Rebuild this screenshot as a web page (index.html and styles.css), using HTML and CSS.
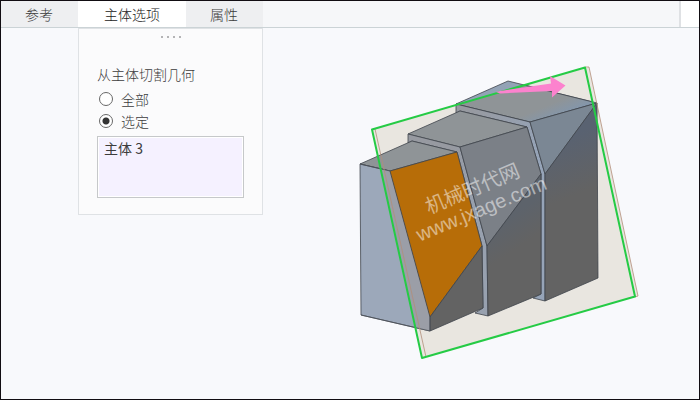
FILE: index.html
```html
<!DOCTYPE html>
<html lang="zh-CN">
<head>
    <meta charset="UTF-8">
    <meta name="viewport" content="width=device-width, initial-scale=1.0">
    <title>主体选项</title>
    <link rel="stylesheet" href="styles.css">
</head>
<body>

<!-- Tabs -->
<header class="tab-bar">
    <button type="button" class="tab">参考</button>
    <button type="button" class="tab tab-body active">主体选项</button>
    <button type="button" class="tab">属性</button>
    <div class="tab-end"></div>
</header>

<main class="workspace">
    <!-- Body options panel -->
    <form class="panel">
        <div class="grip"><span></span><span></span><span></span><span></span></div>
        <fieldset class="options">
            <legend>从主体切割几何</legend>
            <label class="option"><input type="radio" name="bodies" value="all"> 全部</label>
            <label class="option"><input type="radio" name="bodies" value="selected" checked> 选定</label>
            <select class="collector" size="3" aria-label="选定主体">
                <option>主体 3</option>
            </select>
        </fieldset>
    </form>

    <!-- Model view -->
    <section class="viewport">
        <svg class="model" viewBox="355 60 290 304" width="290" height="304">
            <defs>
                <linearGradient id="shade" gradientUnits="userSpaceOnUse" x1="560" y1="140" x2="582" y2="192">
                    <stop offset="0" stop-color="#596271"/>
                    <stop offset="1" stop-color="#636363"/>
                </linearGradient>
                <linearGradient id="shadeMid" gradientUnits="userSpaceOnUse" x1="505" y1="220" x2="522" y2="245">
                    <stop offset="0" stop-color="#5d636b"/>
                    <stop offset="1" stop-color="#636363"/>
                </linearGradient>
                <linearGradient id="top" gradientUnits="userSpaceOnUse" x1="540" y1="98" x2="549" y2="120">
                    <stop offset="0.4" stop-color="#8f9497"/>
                    <stop offset="1" stop-color="#8496aa"/>
                </linearGradient>
                <linearGradient id="side" gradientUnits="userSpaceOnUse" x1="470" y1="120" x2="545" y2="145">
                    <stop offset="0" stop-color="#979aa1"/>
                    <stop offset="1" stop-color="#96a4b8"/>
                </linearGradient>
                <linearGradient id="sideMid" gradientUnits="userSpaceOnUse" x1="450" y1="150" x2="488" y2="160">
                    <stop offset="0" stop-color="#979aa1"/>
                    <stop offset="1" stop-color="#98a1af"/>
                </linearGradient>
                <clipPath id="inPlane">
                    <path d="M372 129 585 67 635 296 422 358Z"/>
                </clipPath>
            </defs>

            <!-- datum plane -->
            <path fill="#e9e6e0" d="M372 129 589 67 638 296 422 358Z"/>

            <g stroke="#3f444b" stroke-width="0.8" stroke-linejoin="round">
                <!-- rear block -->
                <path fill="#93a3b6" d="M456 104 508 81 597 103 530 122Z"/>
                <path fill="url(#top)" clip-path="url(#inPlane)" d="M456 104 508 81 597 103 530 122Z"/>
                <path fill="url(#side)" d="M456 104 530 122 545 174 545 301 533 298 541 294 541 174 527 127 460 111 456 113Z"/>
                <path fill="#7b8794" d="M530 122 597 103 545 174Z"/>
                <path fill="url(#shade)" d="M597 103 598 278 545 301 545 174Z"/>

                <!-- middle block -->
                <path fill="#8f9497" d="M408 134 460 111 527 127 460 147Z"/>
                <path fill="url(#sideMid)" d="M408 134 460 147 487 246 488 316 475 313 483 308 482 246 457 152 412 141 408 143Z"/>
                <path fill="#7b8087" d="M460 147 527 127 541 174 487 246Z"/>
                <path fill="url(#shadeMid)" d="M487 246 541 174 541 294 488 316Z"/>

                <!-- front block -->
                <path fill="#8f9497" d="M360 164 412 141 457 152 390 171Z"/>
                <path fill="#9ca8ba" d="M360 164 390 171 430 317 430 331 361 315Z"/>
                <path fill="#9b9ea7" stroke="none" clip-path="url(#inPlane)" d="M380 169 390 171 430 317 430 331 410 327Z"/>
                <path fill="#b76d08" d="M390 171 457 152 482 246 430 317Z"/>
                <path fill="#636363" d="M430 317 482 246 483 308 430 331Z"/>
            </g>
            <path fill="none" stroke="#4b5058" stroke-width="0.8" d="M360 164 390 171M361 315 430 331V317"/>

            <!-- plane outlines -->
            <path fill="none" stroke="#b28e7a" stroke-width="0.8" d="M375 129 426 357M585 67 589 67 638 296 635 297"/>
            <path fill="none" stroke="#25cb45" stroke-width="2" stroke-linejoin="round" d="M372 129.500 585 67.500 635 296.500 422 358Z"/>

            <!-- direction arrow -->
            <path fill="#fc82ce" d="M496 92 500 91 551 83.500 550 76 565.500 85.500 552 97.500 552 91 500 93.500Z"/>

            <g class="watermark" transform="rotate(-22.500 422 242)">
                <text x="439" y="219" font-size="20">机械时代网</text>
                <text x="420" y="241" font-size="20">www.jxage.com</text>
            </g>
        </svg>
    </section>
</main>

</body>
</html>
```
FILE: styles.css
```css
* {
    box-sizing: border-box;
}

body {
    display: flex;
    flex-direction: column;
    min-height: 100vh;
    margin: 0;
    border: 1px solid #110d12;
    background-color: #f8f9fc;
    color: #3c3c3c;
    font-family: "Noto Sans CJK SC", sans-serif;
    font-size: 14px;
    font-weight: 300;
    line-height: 20px;
}

.tab-bar {
    display: flex;
    height: 27px;
    border-bottom: 1px solid #cbd3d6;
    background-color: #f6f7f9;
}

.tab {
    padding: 0 25px 0 24px;
    border: none;
    background-color: #eeeff1;
    color: inherit;
    font: inherit;
}

.tab-body {
    padding: 0 26px;
}

.tab.active {
    background-color: #fff;
    color: #222;
}

.tab-end {
    width: 20px;
    margin-left: auto;
    border-left: 2px solid #dfe1e4;
    background-color: #fff;
}

.workspace {
    display: flex;
    flex: 1;
    align-items: flex-start;
}

.panel {
    flex: none;
    width: 185px;
    margin-left: 77px;
    padding: 7px 18px 16px;
    border: 1px solid #dfe2e5;
    background-color: #fbfbfc;
}

.grip {
    display: flex;
    justify-content: center;
    gap: 4px;
    margin-bottom: 26px;
}

.grip span {
    width: 2px;
    height: 2px;
    background-color: #b4b4b6;
}

.options {
    margin: 0;
    padding: 0;
    border: none;
}

.options legend {
    padding: 0;
    margin-bottom: 4px;
}

.option {
    display: flex;
    align-items: center;
    gap: 8px;
    height: 22px;
    padding-left: 2px;
}

.option input {
    appearance: none;
    width: 14px;
    height: 14px;
    margin: 0;
    border: 1px solid #686868;
    border-radius: 50%;
    background-color: #fff;
}

.option input:checked {
    background-image: radial-gradient(circle, #333 3px, transparent 4px);
}

.collector {
    display: block;
    width: 100%;
    height: 62px;
    margin-top: 4px;
    padding: 1px;
    border: 1px solid #c6c8ca;
    border-radius: 0;
    background-color: #f5f1ff;
    box-shadow: inset 0 0 0 1px #fff;
    color: inherit;
    font: inherit;
    overflow: hidden;
}

.collector option {
    padding: 0 5px;
}

.viewport {
    display: flex;
    flex: 1;
    justify-content: center;
    padding: 32px 0 0 38px;
}

.model {
    flex: none;
}

.watermark {
    fill: #fff;
    fill-opacity: 0.5;
    font-family: "Liberation Sans", "Noto Sans CJK SC", sans-serif;
    font-weight: 400;
}
```
